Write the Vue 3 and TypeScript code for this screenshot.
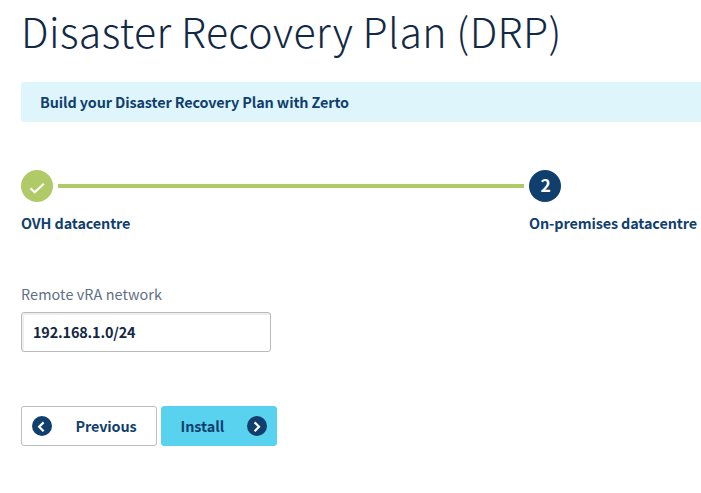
<script setup lang="ts">
import { ref } from 'vue'

const network = ref<string>('192.168.1.0/24')
</script>

<template>
  <main class="page">
    <h1 class="title"><span>Disaster Recovery Plan (DRP)</span></h1>
    <p class="banner"><span class="banner-text">Build your Disaster Recovery Plan with Zerto</span></p>

    <div class="stepper">
      <span class="badge done">
        <svg width="32" height="32" viewBox="0 0 32 32"><path d="M9.5 18.2l4.2 4L22.8 13.7" fill="none" stroke="#fff" stroke-width="2.1" /></svg>
      </span>
      <span class="line"></span>
      <span class="badge current">2</span>
    </div>
    <div class="labels">
      <span class="label-one">OVH datacentre</span>
      <span class="label-two">On-premises datacentre</span>
    </div>

    <label class="field-label" for="network"><span>Remote vRA network</span></label>
    <input id="network" v-model="network" class="field" type="text" />

    <div class="actions">
      <button class="btn previous" type="button">
        <svg width="20" height="20" viewBox="0 0 20 20"><circle cx="10" cy="10" r="10" fill="#113f6d" /><path d="M11.6 6.4L7.2 10.8l4.4 4.4" fill="none" stroke="#fff" stroke-width="2.2" /></svg>
        <span>Previous</span>
      </button>
      <button class="btn install" type="button">
        <span>Install</span>
        <svg width="20" height="20" viewBox="0 0 20 20"><circle cx="10" cy="10" r="10" fill="#113f6d" /><path d="M7.6 6.4L12 10.8l-4.4 4.4" fill="none" stroke="#fff" stroke-width="2.2" /></svg>
      </button>
    </div>
  </main>
</template>

<style>
body {
  margin: 0;
  background: #fff;
  overflow: hidden;
}
</style>

<style scoped>
.page {
  box-sizing: border-box;
  width: 701px;
  height: 493px;
  padding-left: 21px;
  font-family: 'Noto Sans CJK SC', 'Noto Sans', sans-serif;
  font-size: 14.4px;
  font-weight: 700;
  line-height: 20px;
  letter-spacing: -0.115px;
  color: #113f6d;
  white-space: nowrap;
}
.title {
  margin: 0;
  height: 82px;
  line-height: 60px;
  font-size: 41px;
  font-weight: 300;
  letter-spacing: 0.4px;
  color: #122844;
}
.banner {
  box-sizing: border-box;
  height: 40px;
  margin: 0;
  padding: 10px 19px;
  border-radius: 3px 0 0 3px;
  background: #dff5fc;
}
.stepper {
  display: flex;
  align-items: center;
  width: 540px;
  margin-top: 48px;
}
.badge {
  display: flex;
  align-items: center;
  justify-content: center;
  width: 32px;
  height: 32px;
  border-radius: 50%;
  color: #fff;
  font-size: 18px;
}
.done {
  background: #b0ca67;
}
.current {
  box-sizing: border-box;
  padding: 0 0 2px 1px;
  background: #113f6d;
  font-size: 17.5px;
}
.line {
  flex: 1;
  height: 4px;
  margin: 0 5px;
  background: #b0ca67;
}
.labels {
  display: flex;
  margin-top: 11px;
}
.label-one {
  width: 508px;
}
.field-label {
  display: block;
  margin-top: 51px;
  font-weight: 400;
  letter-spacing: 0.09px;
  color: #5f6f86;
}
.field {
  display: block;
  box-sizing: border-box;
  width: 250px;
  height: 40px;
  margin: 8px 0 0;
  padding: 0 11px 2px;
  border: 1px solid #b9babb;
  border-radius: 3px;
  box-shadow: inset 2px 2px 0 #eeeeef;
  background: #fff;
  font: inherit;
  letter-spacing: -0.15px;
  color: #122844;
  outline: none;
}
.actions {
  display: flex;
  gap: 4px;
  margin-top: 54px;
}
.btn {
  display: flex;
  align-items: center;
  box-sizing: border-box;
  height: 40px;
  border: 1px solid #bcbdbe;
  border-radius: 3px;
  background: #fff;
  font: inherit;
  letter-spacing: -0.115px;
  color: #113f6d;
}
.previous {
  width: 136px;
  padding: 0 0 0 10px;
  gap: 23.5px;
}
.install {
  justify-content: space-between;
  width: 116px;
  padding: 0 9px 0 18.5px;
  border-color: #59d2ef;
  background: #59d2ef;
  letter-spacing: -0.05px;
}
</style>
